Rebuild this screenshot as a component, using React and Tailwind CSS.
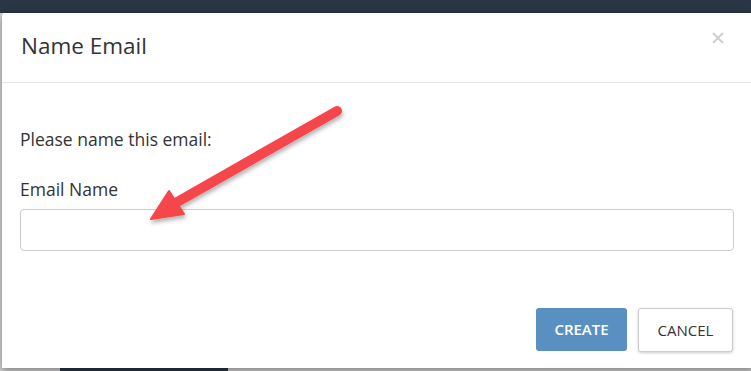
import React from "react";

const font = { fontFamily: '"Open Sans", "Liberation Sans", sans-serif' };

function Arrow() {
  return (
    <svg
      className="absolute left-0 top-0 pointer-events-none"
      width="751"
      height="371"
      viewBox="0 0 751 371"
    >
      <defs>
        <filter id="arrowShadow" x="-20%" y="-20%" width="140%" height="140%">
          <feDropShadow dx="1" dy="3" stdDeviation="2" floodColor="#000" floodOpacity="0.3" />
        </filter>
      </defs>
      <g filter="url(#arrowShadow)" fill="#f5474b" stroke="#f5474b">
        <line x1="337" y1="111" x2="172" y2="205" strokeWidth="10" strokeLinecap="round" />
        <polygon points="151,219 169,191 184,214" strokeWidth="2" strokeLinejoin="round" />
      </g>
    </svg>
  );
}

export default function App() {
  return (
    <div className="relative w-[751px] h-[371px] overflow-hidden bg-[#d4d4d4]" style={font}>
      {/* backdrop */}
      <div className="h-[13px] bg-[#2b3644]" />
      <div className="absolute bottom-0 left-[60px] w-[168px] h-[4px] bg-[#2b3644]" />

      {/* modal */}
      <div className="absolute left-[2px] top-[13px] w-[752px] h-[355px] bg-white rounded-tl-[3px] shadow-[0_3px_9px_rgba(0,0,0,0.4)] flex flex-col">
        <div className="h-[70px] border-b border-[#e5e5e5] flex items-center justify-between pl-[19px] pr-[30px]">
          <h4 className="text-[22.5px] text-[#333] leading-none pb-[3px]">Name Email</h4>
          <svg width="12" height="12" viewBox="0 0 12 12" className="-mt-[20px]">
            <path d="M1 1 L11 11 M11 1 L1 11" stroke="#cfcfcf" strokeWidth="2" />
          </svg>
        </div>
        <div className="flex flex-col px-[18px] pt-[45px] flex-1">
          <p className="text-[17.5px] text-[#333] leading-[22px]">Please name this email:</p>
          <label className="mt-[28px] text-[17.5px] text-[#333] leading-[22px]">Email Name</label>
          <input
            className="mt-[9px] h-[42px] w-[714px] border border-[#ccc] rounded-[4px] outline-none"
            type="text"
          />
          <div className="flex justify-end gap-[11px] mt-[57px] pr-[3px]">
            <button className="w-[91px] h-[43px] bg-[#5a8fc1] text-white rounded-[3px] text-[15px] font-semibold">
              CREATE
            </button>
            <button className="w-[95px] h-[44px] bg-white text-[#333] border border-[#ccc] rounded-[3px] text-[15px] shadow-[0_1px_3px_rgba(0,0,0,0.2)]">
              CANCEL
            </button>
          </div>
        </div>
      </div>

      <Arrow />
    </div>
  );
}
